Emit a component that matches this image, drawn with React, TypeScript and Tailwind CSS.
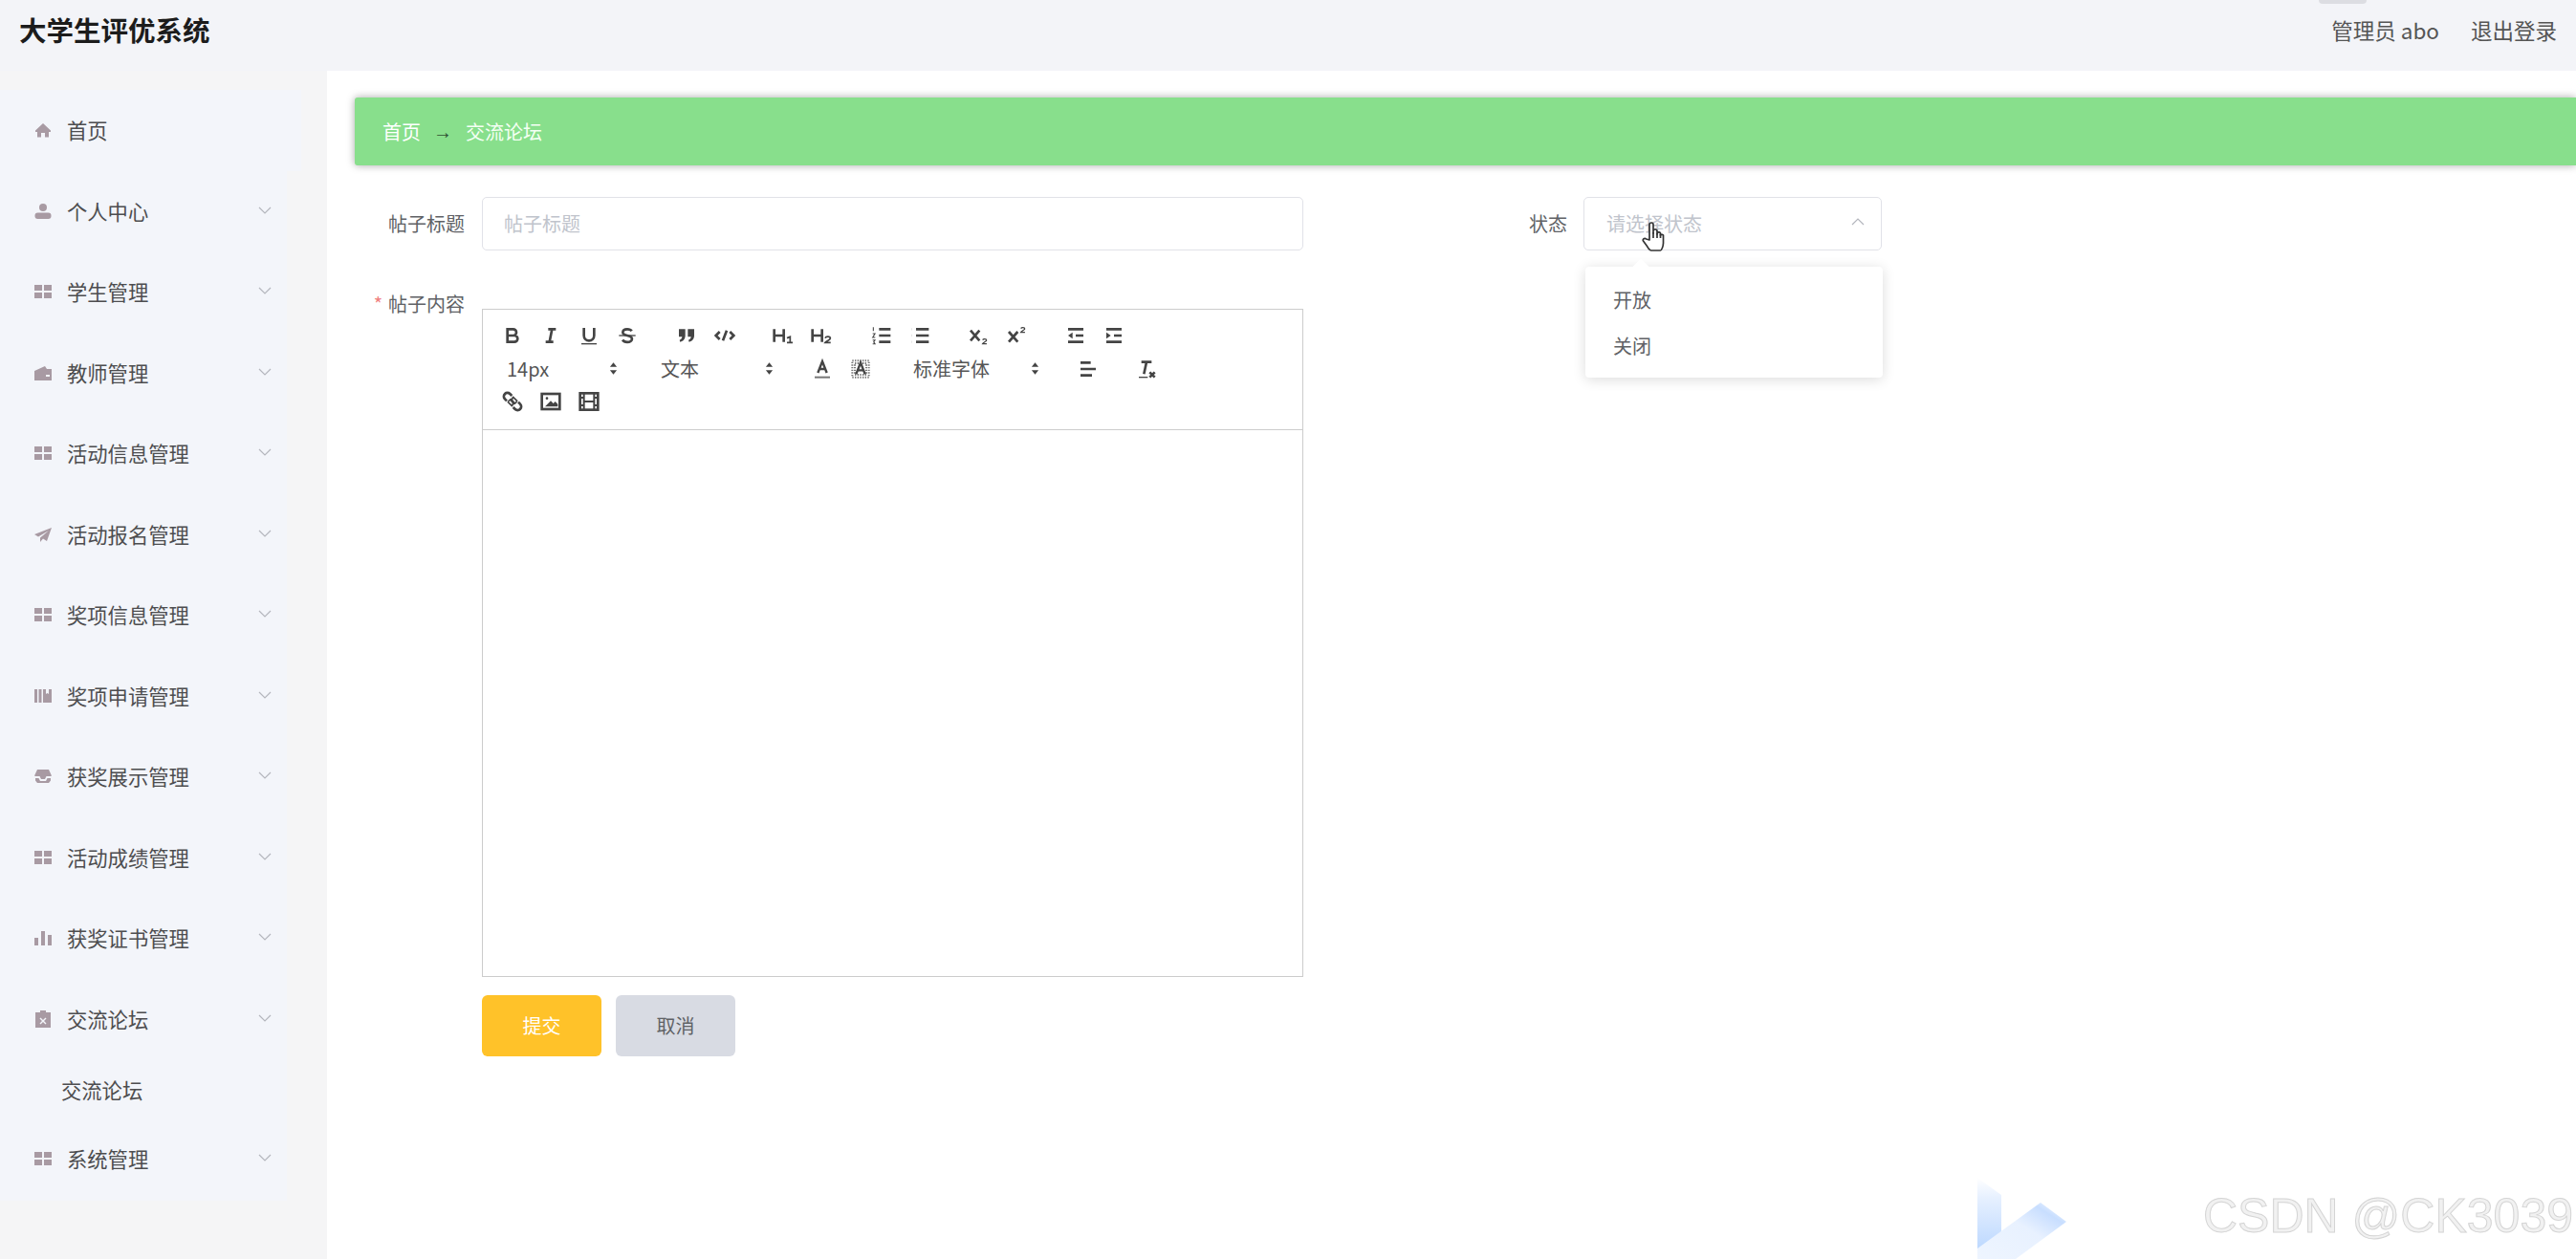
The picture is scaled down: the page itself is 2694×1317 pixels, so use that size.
import type { ReactNode } from "react";

const iconPaths: Record<string, ReactNode> = {
  home: <path d="M9 2 1 9.5V11h2v5.5h4V12h4v4.500h4V11h2V9.500z" />,
  user: (
    <>
      <circle cx="9" cy="5" r="4" />
      <rect x="0.500" y="10.500" width="17" height="6.500" rx="3" />
    </>
  ),
  grid: (
    <>
      <rect x="0" y="2" width="8" height="6" />
      <rect x="10" y="2" width="8" height="6" />
      <rect x="0" y="10" width="8" height="6" />
      <rect x="10" y="10" width="8" height="6" />
    </>
  ),
  wallet: <path fillRule="evenodd" d="M0 7 11 2l2 3h5v12H0zm12 4v2h4v-2z" />,
  send: <path d="M18 2 0 9l4 2.500L15 5 6 12.500V17l3-3.500 4 2.500z" />,
  box: <path fillRule="evenodd" d="M0 2h3v14H0zM4.500 2h3v14h-3zM9 2h3v5l1.500-1 1.500 1V2h3v14H9z" />,
  inbox: <path d="M3 2h12l3 6.500-1 .5h-4.500L11 12H7L5.500 9H1L0 8.500zM1 11h3.500L6 14h6l1.500-3H17v2.500L15 16H3l-2-2.500z" />,
  chart: (
    <>
      <rect x="0" y="9" width="4" height="8" />
      <rect x="7" y="2" width="4" height="15" />
      <rect x="14" y="6" width="4" height="11" />
    </>
  ),
  clip: <path fillRule="evenodd" d="M6 0h6v2h5v16H1V2h5zM6.500 7.500 5.500 8.500 8 11l-2.500 2.500 1 1L9 12l2.500 2.500 1-1L10 11l2.500-2.500-1-1L9 10z" />,
};

const menu = [
  { label: "个人中心", icon: "user" },
  { label: "学生管理", icon: "grid" },
  { label: "教师管理", icon: "wallet" },
  { label: "活动信息管理", icon: "grid" },
  { label: "活动报名管理", icon: "send" },
  { label: "奖项信息管理", icon: "grid" },
  { label: "奖项申请管理", icon: "box" },
  { label: "获奖展示管理", icon: "inbox" },
  { label: "活动成绩管理", icon: "grid" },
  { label: "获奖证书管理", icon: "chart" },
  { label: "交流论坛", icon: "clip" },
];

const MenuIcon = ({ name }: { name: string }) => (
  <svg viewBox="0 0 18 18" className="w-[18px] h-[18px] shrink-0 fill-[#a89aa3]">
    {iconPaths[name]}
  </svg>
);

const Chevron = ({ up = false }: { up?: boolean }) => (
  <svg viewBox="0 0 14 8" className="w-[14px] h-[8px] fill-none stroke-[#b4b6bd] stroke-[1.2]">
    <path d={up ? "M1 7 7 1l6 6" : "M1 1l6 6 6-6"} />
  </svg>
);

const MenuRow = ({ label, icon }: { label: string; icon: string }) => (
  <div className="flex items-center h-[84.5px] pl-[36px] pr-[16px] w-[300px]">
    <MenuIcon name={icon} />
    <span className="ml-[16px] text-[21.300px] text-[#4d4d4f]">{label}</span>
    <span className="ml-auto mb-[2px] flex">
      <Chevron />
    </span>
  </div>
);

const Sidebar = () => (
  <aside className="w-[342px] shrink-0 bg-[#f5f5f6] pt-[20px]">
    <div className="w-[315px] h-[84.5px] bg-[#f3f5fa] flex items-center pl-[36px]">
      <MenuIcon name="home" />
      <span className="ml-[16px] text-[21.300px] text-[#4d4d4f]">首页</span>
    </div>
    <div className="w-[300px] bg-[#f3f5fa] h-[1077px]">
      {menu.map((item) => (
        <MenuRow key={item.label} {...item} />
      ))}
      <div className="h-[64px] flex items-center pl-[64px] text-[21.300px] text-[#4d4d4f]">交流论坛</div>
      <div className="-mt-[2px]">
        <MenuRow label="系统管理" icon="grid" />
      </div>
    </div>
  </aside>
);

// quill snow toolbar icons
const toolIcons: Record<string, ReactNode> = {
  bold: <path d="M5 4h4.500a2.500 2.500 0 0 1 0 5H5zM5 9h5.500a2.500 2.500 0 0 1 0 5H5z" />,
  italic: <path d="M7 4h6M5 14h6M10 4 8 14" />,
  underline: (
    <>
      <path d="M5 3v6a4 4 0 0 0 8 0V3" />
      <path d="M3 15.500h12" className="stroke-1" />
    </>
  ),
  strike: (
    <>
      <path d="M12.500 5.500C11.800 4.400 10.500 4 9 4 6.800 4 5.500 5.200 5.500 6.600c0 1.500 1.300 2 3.500 2.400 2.400.5 3.700 1.100 3.700 2.600 0 1.500-1.500 2.600-3.700 2.600-1.700 0-3-.6-3.700-1.800" />
      <path d="M2.500 9h13" className="stroke-1" />
    </>
  ),
  quote: (
    <>
      <path d="M3 4h5v5c0 2.500-1.500 4.500-4 5l-.5-1.500c1.300-.5 2-1.300 2-2.500H3z" className="fill-[#444] stroke-0" />
      <path d="M10 4h5v5c0 2.500-1.500 4.500-4 5l-.5-1.500c1.300-.5 2-1.300 2-2.500H10z" className="fill-[#444] stroke-0" />
    </>
  ),
  code: <path d="M5 6 2 9l3 3M13 6l3 3-3 3M10.500 5l-3 8" />,
  h1: (
    <>
      <path d="M2 4v10M9.500 4v10M2 9h7.500" />
      <path d="M12 11l2.500-1v4.500M12 14.500h4.500" className="stroke-[1.300]" />
    </>
  ),
  h2: (
    <>
      <path d="M2 4v10M9.500 4v10M2 9h7.500" />
      <path d="M12 11c.5-1.500 4-1.500 4 .3 0 1.200-3 1.700-4 3.200h4.300" className="stroke-[1.300]" />
    </>
  ),
  ol: (
    <>
      <path d="M7 4h9M7 9h9M7 14h9" />
      <path d="M2.500 2.500v3M2 7.500h1.800L2 10.500h2M2 12.500h1.800l-1 1.500 1 1.500H2" className="stroke-[.8]" />
    </>
  ),
  ul: (
    <>
      <path d="M6 4h10M6 9h10M6 14h10" />
      <path d="M2.500 4h.1M2.500 9h.1M2.500 14h.1" className="stroke-[1.800]" />
    </>
  ),
  sub: (
    <>
      <path d="M3 5l7 8M10 5l-7 8" />
      <path d="M12.500 12.500c.5-1 3-1 3 .2 0 1-2.200 1.300-3 2.800h3.200" className="stroke-1" />
    </>
  ),
  sup: (
    <>
      <path d="M3 6l7 8M10 6l-7 8" />
      <path d="M12.500 3.500c.5-1 3-1 3 .2 0 1-2.200 1.300-3 2.800h3.200" className="stroke-1" />
    </>
  ),
  outdent: (
    <>
      <path d="M3 4h12M9 9h6M3 14h12" />
      <path d="M6.500 6.500v5L3 9z" className="fill-[#444] stroke-0" />
    </>
  ),
  indent: (
    <>
      <path d="M3 4h12M9 9h6M3 14h12" />
      <path d="M3 6.500v5L6.500 9z" className="fill-[#444] stroke-0" />
    </>
  ),
  color: (
    <>
      <path d="M5.500 12 9 3l3.500 9M6.700 9h4.600" className="stroke-[1.800]" />
      <path d="M3 15.500h12" className="stroke-[#777] stroke-[1.500]" />
    </>
  ),
  background: (
    <>
      <rect x="2.500" y="2.500" width="13" height="13" className="stroke-[#777] stroke-[1.500] [stroke-dasharray:1_1]" />
      <rect x="4.500" y="4.500" width="9" height="9" className="stroke-[#777] stroke-[1.500] [stroke-dasharray:1_1]" />
      <path d="M5.500 13 9 4l3.500 9M6.700 10h4.600" className="stroke-[1.800]" />
    </>
  ),
  align: <path d="M3 4h8M3 9h12M3 14h9" />,
  clean: (
    <>
      <path d="M5 3.500h8M9 3.500 7 13" />
      <path d="M3 15.500h7" className="stroke-1" />
      <path d="M11.500 11.500l4 4M15.500 11.500l-4 4" />
    </>
  ),
  link: (
    <>
      <path d="M7 7 11 11" />
      <path d="M8.500 4.500 7 3a2.800 2.800 0 0 0-4 4l1.500 1.500" />
      <path d="M13.500 9.500 15 11a2.800 2.800 0 0 1-4 4l-1.500-1.500" />
      <path d="M5.500 9.500l3 3a2.800 2.800 0 0 0 0-4l-1-1a2.800 2.800 0 0 0-2 2zM9.500 5.500l3 3a2.800 2.800 0 0 1-2 2l-1-1a2.800 2.800 0 0 1 0-4z" className="stroke-[1.200]" />
    </>
  ),
  image: (
    <>
      <rect x="2" y="3" width="14" height="12" />
      <path d="M4.500 13 9 8.500l2 2 1.500-1.500 2 2V13z" className="fill-[#444] stroke-0" />
      <circle cx="6" cy="6.500" r="1" className="fill-[#444] stroke-0" />
    </>
  ),
  video: (
    <>
      <rect x="2" y="2.500" width="14" height="13" />
      <path d="M5 2.500v13M13 2.500v13M5 9h8M2 6h3M2 12h3M13 6h3M13 12h3" className="stroke-[1.500]" />
    </>
  ),
};

const Tool = ({ name }: { name: string }) => (
  <span className="w-[40px] h-full flex items-center justify-center shrink-0">
    <svg viewBox="0 0 18 18" className="w-[24px] h-[24px] fill-none stroke-[#444] stroke-2">
      {toolIcons[name]}
    </svg>
  </span>
);

const Picker = ({ label, width }: { label: string; width: string }) => (
  <span className={`${width} h-full shrink-0 flex items-center pl-[14px] relative text-[20px] text-[#555]`}>
    {label}
    <svg viewBox="0 0 10 16" className="absolute right-[9px] top-[9px] w-[9px] h-[15px] fill-[#444]">
      <path d="M5 1 9 6H1zM5 15 1 10h8z" />
    </svg>
  </span>
);

const ToolRow = ({ children }: { children: ReactNode }) => (
  <div className="flex h-[34.5px] items-center">{children}</div>
);

const Toolbar = () => (
  <div className="h-[126px] border-b border-[#ccc] pt-[10px] pl-[11px]">
    <ToolRow>
      {["bold", "italic", "underline", "strike"].map((n) => <Tool key={n} name={n} />)}
      <span className="w-[22px]" />
      <Tool name="quote" />
      <Tool name="code" />
      <span className="w-[21px]" />
      <Tool name="h1" />
      <Tool name="h2" />
      <span className="w-[23px]" />
      <Tool name="ol" />
      <Tool name="ul" />
      <span className="w-[21px]" />
      <Tool name="sub" />
      <Tool name="sup" />
      <span className="w-[22px]" />
      <Tool name="outdent" />
      <Tool name="indent" />
    </ToolRow>
    <ToolRow>
      <Picker label="14px" width="w-[139px]" />
      <span className="w-[22px]" />
      <Picker label="文本" width="w-[141px]" />
      <span className="w-[22px]" />
      <Tool name="color" />
      <Tool name="background" />
      <span className="w-[21px]" />
      <Picker label="标准字体" width="w-[155px]" />
      <span className="w-[22px]" />
      <Tool name="align" />
      <span className="w-[21px]" />
      <Tool name="clean" />
    </ToolRow>
    <ToolRow>
      <Tool name="link" />
      <Tool name="image" />
      <Tool name="video" />
    </ToolRow>
  </div>
);

const HandCursor = () => (
  <svg viewBox="0 0 24 36" className="absolute left-[60px] top-[23px] w-[24px] h-[36px] fill-white stroke-[#333] stroke-[1.700]">
    <path
      strokeLinejoin="round"
      d="M8 21V5a2 2 0 0 1 4 0v9l0-2a2 2 0 0 1 4 0v3l0-1a2 2 0 0 1 3.500 0v2a2 2 0 0 1 3 0v8c0 4-2 8-3 8H10c-2 0-3-2-4.500-4.500L1.500 22c-1-2 1.500-3.500 3-2z"
    />
    <path d="M12 13v6M16 14v5M19.500 15v4" />
  </svg>
);

const StatusSelect = () => (
  <div className="relative w-[312px] h-[56px] ml-[17px] border border-[#e1e2e8] rounded-[5px] flex items-center pl-[23px] pr-[17px] text-[20px] text-[#c0c4cc]">
    请选择状态
    <span className="ml-auto mb-[4px] flex">
      <Chevron up />
    </span>
    <HandCursor />
    <div className="absolute left-[1px] top-[72px] w-[311px] h-[116px] bg-white rounded-[4px] shadow-[0_2px_14px_rgba(0,0,0,0.14)] pl-[29px] pt-[11px] text-[20px] text-[#606266]">
      <span className="absolute left-[52px] -top-[6px] w-[12px] h-[12px] bg-white rotate-45" />
      <div className="h-[48px] flex items-center">开放</div>
      <div className="h-[48px] flex items-center">关闭</div>
    </div>
  </div>
);

const Watermark = () => (
  <div className="absolute left-[2068px] top-[1212px] w-[626px] h-[105px] pointer-events-none">
    <svg viewBox="0 0 106 105" className="absolute left-0 top-0 w-[106px] h-[105px]">
      <defs>
        <linearGradient id="bar" x1="0" y1="0" x2="0" y2="1">
          <stop offset="0" stopColor="#ffffff" />
          <stop offset="0.25" stopColor="#e6f0ff" />
          <stop offset="1" stopColor="#b5d4ff" />
        </linearGradient>
        <linearGradient id="arm" x1="0" y1="1" x2="1" y2="0">
          <stop offset="0" stopColor="#eef5ff" />
          <stop offset="0.55" stopColor="#e8f1ff" />
          <stop offset="0.8" stopColor="#c8deff" />
          <stop offset="1" stopColor="#ffffff" />
        </linearGradient>
      </defs>
      <path d="M0 20 25 38V95L0 105z" fill="url(#bar)" />
      <path d="M0 94 66 46 93 66 40 105H0z" fill="url(#arm)" />
    </svg>
    <span className="absolute left-[236px] top-[24px] font-['Liberation_Sans',sans-serif] text-[50px] leading-[72px] whitespace-nowrap text-[#f1f1f1] [-webkit-text-stroke:1px_#d4d4d4]">
      CSDN @CK3039
    </span>
  </div>
);

export default function App() {
  return (
    <div className="relative w-full h-[1317px] overflow-hidden bg-white font-['Noto_Sans_CJK_SC','Liberation_Sans',sans-serif]">
      <header className="h-[74px] bg-[#f3f4f8] flex items-center pl-[20px] pr-[20px] relative">
        <h1 className="text-[28.500px] font-bold text-[#1c1c1c] -mt-[12px]">大学生评优系统</h1>
        <div className="ml-auto flex gap-[33px] text-[22.500px] text-[#555] -mt-[10px]">
          <span>管理员 abo</span>
          <span>退出登录</span>
        </div>
        <span className="absolute left-[2425px] top-0 w-[50px] h-[4px] rounded-b-full bg-[#dcdde2]" />
      </header>
      <div className="flex h-[1243px]">
        <Sidebar />
        <main className="flex-1 min-w-0 pl-[29px] pt-[28px]">
          <div className="h-[71px] bg-[#88df8c] rounded-l-[3px] shadow-[0_0_8px_rgba(0,0,0,0.35)] flex items-center pl-[29px] text-[20px] text-white">
            <span>首页</span>
            <span className="ml-[13px] w-[20px] font-['Liberation_Sans',sans-serif] text-[#2f4f33]">→</span>
            <span className="ml-[14px] text-[#f4fff4]">交流论坛</span>
          </div>
          <div className="mt-[33px] flex items-center text-[20px] text-[#606266]">
            <label className="w-[115px] text-right">帖子标题</label>
            <div className="ml-[18px] w-[859px] h-[56px] border border-[#e1e2e8] rounded-[5px] flex items-center pl-[22px] text-[#c0c4cc]">
              帖子标题
            </div>
            <label className="ml-[236px]">状态</label>
            <StatusSelect />
          </div>
          <div className="mt-[61px] flex text-[20px] text-[#606266]">
            <label className="w-[115px] text-right -mt-[20px]">
              <span className="text-[#f08080] mr-[6px]">*</span>帖子内容
            </label>
            <div className="ml-[18px]">
              <div className="w-[859px] h-[699px] border border-[#ccc]">
                <Toolbar />
              </div>
              <div className="mt-[19px] flex gap-[15px]">
                <button className="w-[125px] h-[64px] rounded-[6px] bg-[#ffc229] text-white">提交</button>
                <button className="w-[125px] h-[64px] rounded-[6px] bg-[#d8dbe3] text-[#606266]">取消</button>
              </div>
            </div>
          </div>
        </main>
      </div>
      <Watermark />
    </div>
  );
}
